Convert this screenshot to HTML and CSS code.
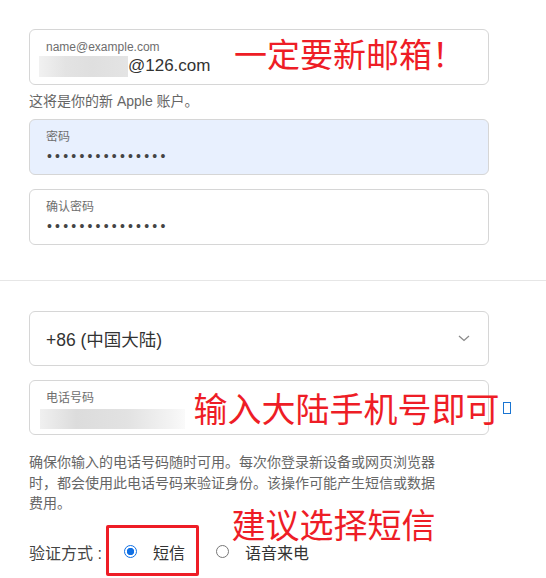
FILE: index.html
```html
<!DOCTYPE html>
<html lang="zh-CN">
<head>
<meta charset="utf-8">
<title>创建 Apple 账户</title>
<link rel="stylesheet" href="styles.css">
</head>
<body>
<main class="page">
  <section class="account">
    <div class="field">
      <span class="field-label">name@example.com</span>
      <span class="field-value"><span class="blur blur-email"></span>@126.com</span>
    </div>
    <p class="helper">这将是你的新 Apple 账户。</p>
    <div class="field field-filled spaced-sm">
      <span class="field-label">密码</span>
      <span class="field-value dots">•••••••••••••••</span>
    </div>
    <div class="field spaced">
      <span class="field-label">确认密码</span>
      <span class="field-value dots">•••••••••••••••</span>
    </div>
  </section>

  <hr class="divider">

  <section class="phone">
    <div class="select">
      <span class="select-value">+86 (中国大陆)</span>
      <svg class="chevron" width="12" height="7" viewBox="0 0 12 7"><path d="M1 1 L6 5.5 L11 1" fill="none" stroke="#8a8a8a" stroke-width="1.3"/></svg>
    </div>
    <div class="field spaced">
      <span class="field-label">电话号码</span>
      <span class="field-value"><span class="blur blur-phone"></span></span>
    </div>
    <p class="desc">确保你输入的电话号码随时可用。每次你登录新设备或网页浏览器时，都会使用此电话号码来验证身份。该操作可能产生短信或数据费用。</p>
    <div class="verify">
      <span class="verify-label">验证方式 :</span>
      <span class="radio radio-on"></span>
      <span class="radio-text">短信</span>
      <span class="radio radio-off"></span>
      <span class="radio-text">语音来电</span>
    </div>
  </section>

  <span class="note note-email">一定要新邮箱！</span>
  <span class="note note-phone">输入大陆手机号即可</span>
  <span class="tofu"></span>
  <span class="note note-sms">建议选择短信</span>
  <span class="mark-box"></span>
</main>
</body>
</html>
```

FILE: styles.css
```css
* { box-sizing: border-box; }

html, body {
  margin: 0;
  padding: 0;
  background: #fff;
}

body {
  font-family: "Liberation Sans", "Noto Sans CJK SC", sans-serif;
  color: #333;
  width: 546px;
  height: 578px;
  overflow: hidden;
}

.page {
  position: relative;
  width: 546px;
  height: 578px;
}

.account {
  margin-left: 29px;
  width: 460px;
  padding-top: 29px;
}

.field {
  height: 56px;
  border: 1px solid #d6d6d6;
  border-radius: 6px;
  background: #fff;
  padding: 9px 16px 0 16px;
  display: flex;
  flex-direction: column;
}

.field-filled {
  background: #e8f0fe;
}

.spaced-sm { margin-top: 8px; }
.spaced { margin-top: 14px; }

.field-label {
  font-size: 12px;
  line-height: 16px;
  color: #6e6e6e;
}

.field-value {
  font-size: 17px;
  line-height: 22px;
  color: #333;
  display: flex;
  align-items: center;
}

.dots {
  font-size: 14px;
  letter-spacing: 3.2px;
  color: #444;
  padding-left: 1px;
  line-height: 20px;
  margin-top: 1px;
}

.blur {
  display: block;
  background: linear-gradient(90deg, #f1f1f1 0%, #e3e3e3 30%, #dfdfdf 60%, #e4e4e4 100%);
}

.blur-email {
  width: 89px;
  height: 21px;
  margin-left: -7px;
}

.blur-phone {
  width: 145px;
  height: 20px;
  margin-left: -6px;
  margin-top: 3px;
  background: linear-gradient(90deg, #f0f0f0 0%, #dcdcdc 25%, #e2e2e2 60%, #f3f3f3 90%, #fafafa 100%);
}

.helper {
  margin: 6px 0 0 0;
  font-size: 14px;
  line-height: 20px;
  color: #666;
}

.divider {
  margin: 35px 0 0 0;
  border: 0;
  border-top: 1px solid #e6e6e6;
  height: 0;
  width: 546px;
}

.phone {
  margin-left: 29px;
  width: 460px;
  padding-top: 30px;
}

.select {
  height: 55px;
  border: 1px solid #d6d6d6;
  border-radius: 6px;
  padding: 0 18px 0 16px;
  display: flex;
  align-items: center;
  justify-content: space-between;
}

.select-value {
  font-size: 17.5px;
  color: #333;
}

.chevron { display: block; }

.phone .field { height: 55px; }

.desc {
  margin: 17px 0 0 0;
  width: 410px;
  font-size: 14px;
  line-height: 20.5px;
  color: #666;
}

.verify {
  margin-top: 26px;
  height: 24px;
  display: flex;
  align-items: center;
  font-size: 16px;
  color: #444;
}

.verify-label { width: 94.5px; white-space: nowrap; }

.radio {
  width: 13px;
  height: 13px;
  border-radius: 50%;
  flex: none;
}

.radio-on {
  border: 1.5px solid #1170e4;
  background: radial-gradient(circle, #1170e4 0 3.4px, #fff 4px);
}

.radio-off {
  border: 1px solid #777;
  margin-left: 30.5px;
}

.radio-text {
  margin-left: 16.5px;
  color: #333;
}

.note {
  position: absolute;
  font-family: "Noto Sans CJK SC", sans-serif;
  color: #ee1d26;
  line-height: 0.9;
  white-space: nowrap;
}

.note-email {
  left: 234px;
  top: 38.5px;
  font-size: 33px;
}

.note-phone {
  left: 193.5px;
  top: 392.7px;
  font-size: 34px;
}

.note-sms {
  left: 231.5px;
  top: 509.2px;
  font-size: 34px;
}

.tofu {
  position: absolute;
  left: 503px;
  top: 402px;
  width: 8px;
  height: 12px;
  border: 1.5px solid #1a75d2;
}

.mark-box {
  position: absolute;
  left: 106px;
  top: 525px;
  width: 93px;
  height: 51px;
  border: 3px solid #ee1d26;
  border-radius: 2px;
}
```
